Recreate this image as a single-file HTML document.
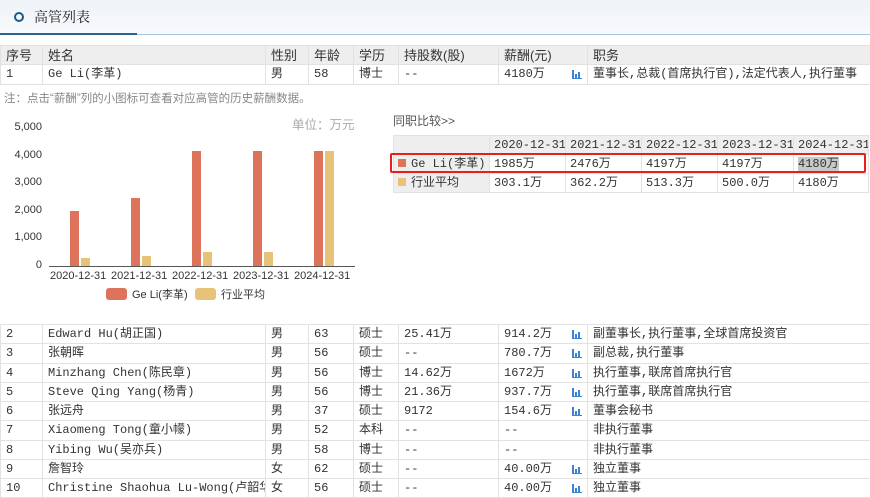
<!DOCTYPE html>
<html><head><meta charset="utf-8">
<style>
*{margin:0;padding:0;box-sizing:border-box}
body{width:870px;height:492px;overflow:hidden;background:#fff;font-family:"Liberation Mono","Noto Sans CJK SC",monospace;font-size:12px;color:#333;position:relative}
.hdr{position:absolute;left:0;top:0;width:870px;height:35px;background:linear-gradient(#eef3f8,#f8fafc)}
.hdr .c{position:absolute;left:14px;top:12px;width:10px;height:10px;border:2px solid #1d5b8c;border-radius:50%}
.hdr .t{position:absolute;left:34px;top:7px;font-family:"Noto Serif CJK SC",serif;font-size:14px;color:#222}
.ul1{position:absolute;left:0;top:33px;width:137px;height:2px;background:#2e6490}
.ul2{position:absolute;left:137px;top:34px;width:733px;height:1px;background:#a9c6de}
table{position:absolute;border-collapse:collapse;table-layout:fixed}
td{border:1px solid #e2e2e2;padding:1px 5px 0;white-space:nowrap;overflow:hidden;height:19.25px;line-height:17px;vertical-align:middle}
.th td{background:#eeeeee;font-family:"Liberation Sans","Noto Sans CJK SC",sans-serif;font-size:13px;color:#333}
.ic{display:inline-block;width:10px;height:9px;position:relative;float:right;margin-top:4px}
.ic i{position:absolute;bottom:0;width:2px;background:#3c82d6}
.note{position:absolute;left:4px;top:90px;color:#888;font-family:"Liberation Sans","Noto Sans CJK SC",sans-serif;font-size:11.5px}
.ax{position:absolute;font-family:"Liberation Sans",sans-serif;font-size:11px;color:#333}
.cjk{font-family:"Liberation Sans","Noto Sans CJK SC",sans-serif}
.bar{position:absolute;width:9px}
.r{background:#dc735a}.y{background:#e6c378}
.cmp td{height:19px;border:1px solid #e2e2e2;padding:1px 4px 0}
.cmp .g{background:#eeeeee}
</style></head><body>
<div class="hdr"><div class="c"></div><div class="t">高管列表</div></div>
<div class="ul1"></div><div class="ul2"></div>

<table style="left:0;top:45px;width:870px">
<colgroup><col style="width:42px"><col style="width:223px"><col style="width:43px"><col style="width:45px"><col style="width:45px"><col style="width:100px"><col style="width:89px"><col style="width:283px"></colgroup>
<tr class="th"><td>序号</td><td>姓名</td><td>性别</td><td>年龄</td><td>学历</td><td>持股数(股)</td><td>薪酬(元)</td><td>职务</td></tr>
<tr><td>1</td><td>Ge Li(李革)</td><td>男</td><td>58</td><td>博士</td><td>--</td><td>4180万<span class="ic"><i style="left:0;height:9px"></i><i style="left:3px;height:5px"></i><i style="left:6px;height:7px"></i><i style="left:0;width:10px;height:1px"></i></span></td><td>董事长,总裁(首席执行官),法定代表人,执行董事</td></tr>
</table>
<div class="note">注：点击“薪酬”列的小图标可查看对应高管的历史薪酬数据。</div>

<div class="ax" style="left:4px;top:121px;width:38px;text-align:right">5,000</div>
<div class="ax" style="left:4px;top:149px;width:38px;text-align:right">4,000</div>
<div class="ax" style="left:4px;top:176px;width:38px;text-align:right">3,000</div>
<div class="ax" style="left:4px;top:204px;width:38px;text-align:right">2,000</div>
<div class="ax" style="left:4px;top:231px;width:38px;text-align:right">1,000</div>
<div class="ax" style="left:4px;top:259px;width:38px;text-align:right">0</div>
<div class="ax cjk" style="left:292px;top:114px;color:#aaa;font-size:12.5px">单位：万元</div>
<div style="position:absolute;left:49px;top:266px;width:306px;height:1px;background:#555"></div>
<div class="bar r" style="left:70px;top:211px;height:55px"></div><div class="bar y" style="left:81px;top:258px;height:8px"></div>
<div class="bar r" style="left:131px;top:198px;height:68px"></div><div class="bar y" style="left:142px;top:256px;height:10px"></div>
<div class="bar r" style="left:192px;top:151px;height:115px"></div><div class="bar y" style="left:203px;top:252px;height:14px"></div>
<div class="bar r" style="left:253px;top:151px;height:115px"></div><div class="bar y" style="left:264px;top:252px;height:14px"></div>
<div class="bar r" style="left:314px;top:151px;height:115px"></div><div class="bar y" style="left:325px;top:151px;height:115px"></div>
<div class="ax" style="left:50px;top:270px">2020-12-31</div>
<div class="ax" style="left:111px;top:270px">2021-12-31</div>
<div class="ax" style="left:172px;top:270px">2022-12-31</div>
<div class="ax" style="left:233px;top:270px">2023-12-31</div>
<div class="ax" style="left:294px;top:270px">2024-12-31</div>
<div style="position:absolute;left:106px;top:288px;width:21px;height:12px;border-radius:3px;background:#dc735a"></div>
<div class="ax cjk" style="left:132px;top:286px">Ge Li(李革)</div>
<div style="position:absolute;left:195px;top:288px;width:21px;height:12px;border-radius:3px;background:#e6c378"></div>
<div class="ax cjk" style="left:221px;top:286px">行业平均</div>

<div class="cjk" style="position:absolute;left:393px;top:112px;color:#555;font-size:12px">同职比较&gt;&gt;</div>
<table class="cmp" style="left:393px;top:135px;width:475px">
<colgroup><col style="width:96px"><col style="width:76px"><col style="width:76px"><col style="width:76px"><col style="width:76px"><col style="width:75px"></colgroup>
<tr><td class="g"></td><td class="g">2020-12-31</td><td class="g">2021-12-31</td><td class="g">2022-12-31</td><td class="g">2023-12-31</td><td class="g">2024-12-31</td></tr>
<tr><td class="g"><span style="display:inline-block;width:8px;height:8px;background:#dc735a;margin-right:5px"></span>Ge Li(李革)</td><td>1985万</td><td>2476万</td><td>4197万</td><td>4197万</td><td><span style="background:#c8c8c8">4180万</span></td></tr>
<tr><td class="g"><span style="display:inline-block;width:8px;height:8px;background:#e6c378;margin-right:5px"></span>行业平均</td><td>303.1万</td><td>362.2万</td><td>513.3万</td><td>500.0万</td><td>4180万</td></tr>
</table>
<div style="position:absolute;left:390px;top:153px;width:476px;height:20px;border:2px solid #e8201c;border-radius:2px"></div>

<table style="left:0;top:324px;width:870px">
<colgroup><col style="width:42px"><col style="width:223px"><col style="width:43px"><col style="width:45px"><col style="width:45px"><col style="width:100px"><col style="width:89px"><col style="width:283px"></colgroup>
<tr><td>2</td><td>Edward Hu(胡正国)</td><td>男</td><td>63</td><td>硕士</td><td>25.41万</td><td>914.2万<span class="ic"><i style="left:0;height:9px"></i><i style="left:3px;height:5px"></i><i style="left:6px;height:7px"></i><i style="left:0;width:10px;height:1px"></i></span></td><td>副董事长,执行董事,全球首席投资官</td></tr>
<tr><td>3</td><td>张朝晖</td><td>男</td><td>56</td><td>硕士</td><td>--</td><td>780.7万<span class="ic"><i style="left:0;height:9px"></i><i style="left:3px;height:5px"></i><i style="left:6px;height:7px"></i><i style="left:0;width:10px;height:1px"></i></span></td><td>副总裁,执行董事</td></tr>
<tr><td>4</td><td>Minzhang Chen(陈民章)</td><td>男</td><td>56</td><td>博士</td><td>14.62万</td><td>1672万<span class="ic"><i style="left:0;height:9px"></i><i style="left:3px;height:5px"></i><i style="left:6px;height:7px"></i><i style="left:0;width:10px;height:1px"></i></span></td><td>执行董事,联席首席执行官</td></tr>
<tr><td>5</td><td>Steve Qing Yang(杨青)</td><td>男</td><td>56</td><td>博士</td><td>21.36万</td><td>937.7万<span class="ic"><i style="left:0;height:9px"></i><i style="left:3px;height:5px"></i><i style="left:6px;height:7px"></i><i style="left:0;width:10px;height:1px"></i></span></td><td>执行董事,联席首席执行官</td></tr>
<tr><td>6</td><td>张远舟</td><td>男</td><td>37</td><td>硕士</td><td>9172</td><td>154.6万<span class="ic"><i style="left:0;height:9px"></i><i style="left:3px;height:5px"></i><i style="left:6px;height:7px"></i><i style="left:0;width:10px;height:1px"></i></span></td><td>董事会秘书</td></tr>
<tr><td>7</td><td>Xiaomeng Tong(童小幪)</td><td>男</td><td>52</td><td>本科</td><td>--</td><td>--</td><td>非执行董事</td></tr>
<tr><td>8</td><td>Yibing Wu(吴亦兵)</td><td>男</td><td>58</td><td>博士</td><td>--</td><td>--</td><td>非执行董事</td></tr>
<tr><td>9</td><td>詹智玲</td><td>女</td><td>62</td><td>硕士</td><td>--</td><td>40.00万<span class="ic"><i style="left:0;height:9px"></i><i style="left:3px;height:5px"></i><i style="left:6px;height:7px"></i><i style="left:0;width:10px;height:1px"></i></span></td><td>独立董事</td></tr>
<tr><td>10</td><td>Christine Shaohua Lu-Wong(卢韶华)</td><td>女</td><td>56</td><td>硕士</td><td>--</td><td>40.00万<span class="ic"><i style="left:0;height:9px"></i><i style="left:3px;height:5px"></i><i style="left:6px;height:7px"></i><i style="left:0;width:10px;height:1px"></i></span></td><td>独立董事</td></tr>
</table>
</body></html>
